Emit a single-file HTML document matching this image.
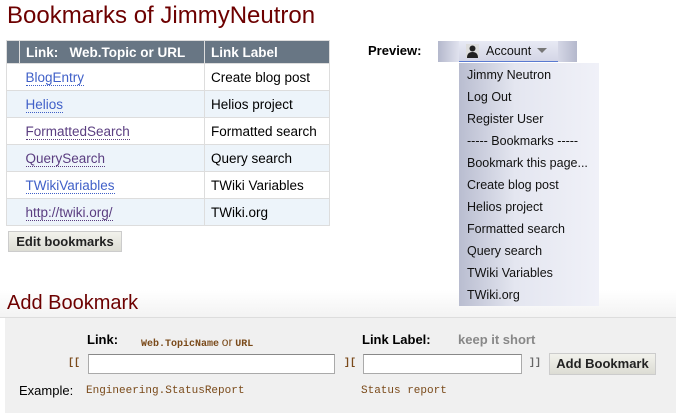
<!DOCTYPE html>
<html><head><meta charset="utf-8"><style>
body{margin:0;width:676px;height:419px;background:#fff;font-family:"Liberation Sans",Arial,sans-serif;position:relative;overflow:hidden}
.a{position:absolute;white-space:nowrap}
h1{position:absolute;margin:0;left:7px;top:2px;font-size:24px;font-weight:normal;color:#6d0000}
table{position:absolute;left:6px;top:40px;border-collapse:collapse;font-size:13.5px}
td,th{height:26px;padding:0 6px;border:1px solid #ddd;text-align:left}
td.e{border-right:none}
td.e + td{border-left:none}
th{background:#687684;color:#fff;font-weight:bold;height:22px;border-color:#ddd}
tr.o td{background:#edf4fa}
a{color:#4060c8;text-decoration:none;border-bottom:1px dotted #4060c8}
a.v{color:#5a3d80;border-color:#5a3d80}
.btn{position:absolute;background:linear-gradient(#f2f2ec,#dcdcd4);border:1px solid #ccc;font-weight:bold;font-size:13px;color:#222;text-align:center}
.dd{position:absolute;left:459px;top:63px;width:140px;height:243px;background:linear-gradient(to right,#b9bdd0,#e4e6f0 40%,#f0f1f8)}
.dd div{position:absolute;left:8px;font-size:12.5px;color:#111}
.mono{font-family:"Liberation Mono",monospace;color:#7a4a1a}
</style></head><body>
<h1>Bookmarks of JimmyNeutron</h1>
<table>
<tr><th style="width:0;padding:0 6px"></th><th style="width:172px">Link:&nbsp;&nbsp; Web.Topic or URL</th><th style="width:112px">Link Label</th></tr>
<tr><td class="e"></td><td><a>BlogEntry</a></td><td>Create blog post</td></tr>
<tr class="o"><td class="e"></td><td><a>Helios</a></td><td>Helios project</td></tr>
<tr><td class="e"></td><td><a class="v">FormattedSearch</a></td><td>Formatted search</td></tr>
<tr class="o"><td class="e"></td><td><a class="v">QuerySearch</a></td><td>Query search</td></tr>
<tr><td class="e"></td><td><a>TWikiVariables</a></td><td>TWiki Variables</td></tr>
<tr class="o"><td class="e"></td><td><a class="v">http://twiki.org/</a></td><td>TWiki.org</td></tr>
</table>
<div class="btn" style="left:8px;top:231px;width:112px;height:19px;line-height:19px">Edit bookmarks</div>

<div class="a" style="left:368px;top:43px;font-size:13px;font-weight:bold">Preview:</div>
<div class="a" style="left:438px;top:41px;width:139px;height:21px;background:linear-gradient(to right,#b4b8cc,#e0e2ee 15%,#d8dae8 85%,#b4b8cc)"></div>
<div class="a" style="left:459px;top:41px;width:99px;height:20px;background:linear-gradient(#e8eaf4,#d4d6e6);border-bottom:1px solid #5a7ad0"></div>
<svg class="a" style="left:466px;top:44px" width="13" height="14"><rect width="13" height="14" fill="#ddd"/><circle cx="6.5" cy="4.5" r="3" fill="#222"/><path d="M1 14 Q1 8 6.5 8 Q12 8 12 14Z" fill="#222"/></svg>
<div class="a" style="left:486px;top:44px;font-size:12.5px;color:#111">Account</div>
<svg class="a" style="left:537px;top:48px" width="10" height="6"><path d="M0 0H10L5 5Z" fill="#777"/></svg>
<div class="dd">
<div style="top:5px">Jimmy Neutron</div><div style="top:27px">Log Out</div><div style="top:49px">Register User</div>
<div style="top:71px">----- Bookmarks -----</div><div style="top:93px">Bookmark this page...</div>
<div style="top:115px">Create blog post</div><div style="top:137px">Helios project</div>
<div style="top:159px">Formatted search</div><div style="top:181px">Query search</div>
<div style="top:203px">TWiki Variables</div><div style="top:225px">TWiki.org</div>
</div>

<div class="a" style="left:0;top:290px;width:676px;height:27px;background:linear-gradient(#fff,#f3f3f3);border-bottom:1px solid #ddd;z-index:-1"></div>
<div class="a" style="left:7px;top:292px;font-size:20px;color:#6d0000">Add Bookmark</div>
<div class="a" style="left:5px;top:318px;width:671px;height:95px;background:#f0f0f0"></div>
<div class="a" style="left:87px;top:332px;font-size:13px;font-weight:bold">Link:</div>
<div class="a" style="left:141px;top:335px;font-size:10px"><b class="mono">Web.TopicName</b> <span style="color:#7a4a1a;font-size:12px">or</span> <b class="mono">URL</b></div>
<div class="a" style="left:362px;top:332px;font-size:13px;font-weight:bold">Link Label:</div>
<div class="a" style="left:458px;top:332px;font-size:13px;font-weight:bold;color:#888">keep it short</div>
<div class="a mono" style="left:68px;top:358px;font-size:10px;font-weight:bold">[[</div>
<div class="a" style="left:88px;top:354px;width:245px;height:18px;background:#fff;border:1px solid #aaa;border-top-color:#888"></div>
<div class="a mono" style="left:344px;top:358px;font-size:10px;font-weight:bold">][</div>
<div class="a" style="left:363px;top:354px;width:157px;height:18px;background:#fff;border:1px solid #aaa;border-top-color:#888"></div>
<div class="a mono" style="left:529px;top:358px;font-size:10px;font-weight:bold;color:#666">]]</div>
<div class="btn" style="left:549px;top:353px;width:105px;height:20px;line-height:20px">Add Bookmark</div>
<div class="a" style="left:19px;top:383px;font-size:13px">Example:</div>
<div class="a mono" style="left:86px;top:385px;font-size:11px">Engineering.StatusReport</div>
<div class="a mono" style="left:361px;top:385px;font-size:11px">Status report</div>
</body></html>
